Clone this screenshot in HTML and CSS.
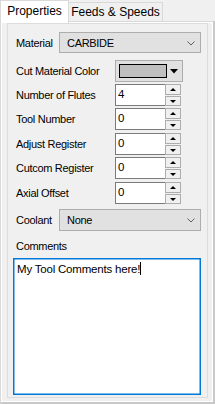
FILE: index.html
```html
<!DOCTYPE html>
<html>
<head>
<meta charset="utf-8">
<link rel="stylesheet" href="styles.css">
</head>
<body>
<div class="tabs">
  <div class="tab active">Properties</div>
  <div class="tab">Feeds &amp; Speeds</div>
</div>
<div class="page">
  <div class="group">
    <div class="row r-material">
      <span class="label">Material</span>
      <div class="combo"><span class="combo-text">CARBIDE</span>
        <svg class="chev" width="8" height="5" viewBox="0 0 8 5"><path d="M0.5 0.5 L4 4 L7.5 0.5" fill="none" stroke="#606060" stroke-width="1"/></svg>
      </div>
    </div>
    <div class="row r-color">
      <span class="label">Cut Material Color</span>
      <div class="colorbtn">
        <span class="swatch"></span>
        <svg class="tri" width="8" height="5" viewBox="0 0 8 5"><path d="M0 0 H8 L4 4.5 Z" fill="#000"/></svg>
      </div>
    </div>
    <div class="row num r1">
      <span class="label">Number of Flutes</span>
      <div class="numeric"><span class="val">4</span><div class="spin"><span class="btn up"></span><span class="btn down"></span></div></div>
    </div>
    <div class="row num r2">
      <span class="label">Tool Number</span>
      <div class="numeric"><span class="val">0</span><div class="spin"><span class="btn up"></span><span class="btn down"></span></div></div>
    </div>
    <div class="row num r3">
      <span class="label">Adjust Register</span>
      <div class="numeric"><span class="val">0</span><div class="spin"><span class="btn up"></span><span class="btn down"></span></div></div>
    </div>
    <div class="row num r4">
      <span class="label">Cutcom Register</span>
      <div class="numeric"><span class="val">0</span><div class="spin"><span class="btn up"></span><span class="btn down"></span></div></div>
    </div>
    <div class="row num r5">
      <span class="label">Axial Offset</span>
      <div class="numeric"><span class="val">0</span><div class="spin"><span class="btn up"></span><span class="btn down"></span></div></div>
    </div>
    <div class="row r-coolant">
      <span class="label">Coolant</span>
      <div class="combo"><span class="combo-text">None</span>
        <svg class="chev" width="8" height="5" viewBox="0 0 8 5"><path d="M0.5 0.5 L4 4 L7.5 0.5" fill="none" stroke="#606060" stroke-width="1"/></svg>
      </div>
    </div>
    <div class="comments-label">Comments</div>
    <div class="textarea">My Tool Comments here!<span class="caret"></span></div>
  </div>
</div>
</body>
</html>
```
FILE: styles.css
```css
* { box-sizing: border-box; }
html, body { margin: 0; padding: 0; }
body {
  width: 215px;
  height: 404px;
  background: #f0f0f0;
  font-family: "Liberation Sans", Arial, sans-serif;
  font-size: 11px;
  letter-spacing: -0.3px;
  color: #000;
  overflow: hidden;
}
.tabs {
  display: flex;
  align-items: flex-end;
  height: 22px;
  position: relative;
  z-index: 2;
}
.tab {
  height: 19px;
  width: 95px;
  border: 1px solid #d9d9d9;
  border-bottom: none;
  background: #f0f0f0;
  font-size: 12px;
  letter-spacing: 0;
  line-height: 18px;
  text-align: center;
  margin-bottom: 1px;
}
.tab.active {
  width: 69px;
  height: 23px;
  line-height: 21px;
  background: #fff;
  border-color: #d9d9d9;
  margin-bottom: -1px;
  margin-right: -1px;
  position: relative;
  z-index: 3;
}
.page {
  height: 383px;
  margin-top: -1px;
  border: 1px solid #d9d9d9;
  border-right: 2px solid #c8c8c8;
  border-bottom: 2px solid #c8c8c8;
  box-shadow: inset 1px 1px 0 #fff, inset -1px -1px 0 #fff;
  padding: 1px 5px 0 6px;
  position: relative;
}
.group {
  height: 375px;
  border: 1px solid #dcdcdc;
  padding: 8px 6px 0 8px;
}
.row {
  display: flex;
  align-items: center;
}
.label { white-space: nowrap; }
.combo {
  margin-left: auto;
  width: 142px;
  height: 21px;
  background: #e1e1e1;
  border: 1px solid #adadad;
  display: flex;
  align-items: center;
  padding-left: 7px;
  position: relative;
}
.chev { position: absolute; right: 5px; top: 8px; }
.r-color { margin-top: 7px; }
.r-color .label { width: 99px; }
.colorbtn {
  width: 68px;
  height: 22px;
  background: #e1e1e1;
  border: 1px solid #adadad;
  display: flex;
  align-items: center;
  padding-left: 3px;
}
.swatch {
  width: 48px;
  height: 14px;
  background: #c0c0c0;
  border: 1px solid #000;
}
.tri { margin-left: 3px; }
.num { height: 22px; }
.r1 { margin-top: 2px; }
.r2 { margin-top: 2px; }
.r3 { margin-top: 3px; }
.r4 { margin-top: 2px; }
.r5 { margin-top: 3px; }
.num .label { width: 99px; }
.numeric {
  width: 66px;
  height: 22px;
  display: flex;
  background: #fff;
  border: 1px solid #7a7a7a;
  border-right: none;
}
.val {
  flex: 1;
  font-size: 11.5px;
  line-height: 19px;
  padding-left: 2px;
}
.spin {
  width: 16px;
  display: flex;
  flex-direction: column;
  gap: 1px;
  background: #f0f0f0;
  margin-top: -1px;
  margin-bottom: -1px;
}
.btn {
  flex: 1;
  background: #f0f0f0;
  border: 1px solid #adadad;
  position: relative;
}
.btn::after {
  content: "";
  position: absolute;
  left: 4px;
  width: 0;
  height: 0;
  border-left: 3px solid transparent;
  border-right: 3px solid transparent;
}
.btn.up::after { top: 3px; border-bottom: 3px solid #000; }
.btn.down::after { top: 3px; border-top: 3px solid #000; }
.r-coolant { margin-top: 5px; }
.r-coolant .combo { height: 22px; }
.comments-label {
  margin-top: 9px;
  height: 13px;
  line-height: 13px;
}
.textarea {
  margin-top: 5px;
  margin-left: -3px;
  width: 188px;
  height: 137px;
  background: #fff;
  border: 1px solid #0078d7;
  box-shadow: inset 0 0 0 0.5px #0078d7;
  padding: 3px 3px;
  font-size: 11.5px;
  letter-spacing: -0.2px;
  line-height: 15px;
}
.caret {
  display: inline-block;
  width: 1px;
  height: 13px;
  background: #000;
  vertical-align: -2px;
}
```
